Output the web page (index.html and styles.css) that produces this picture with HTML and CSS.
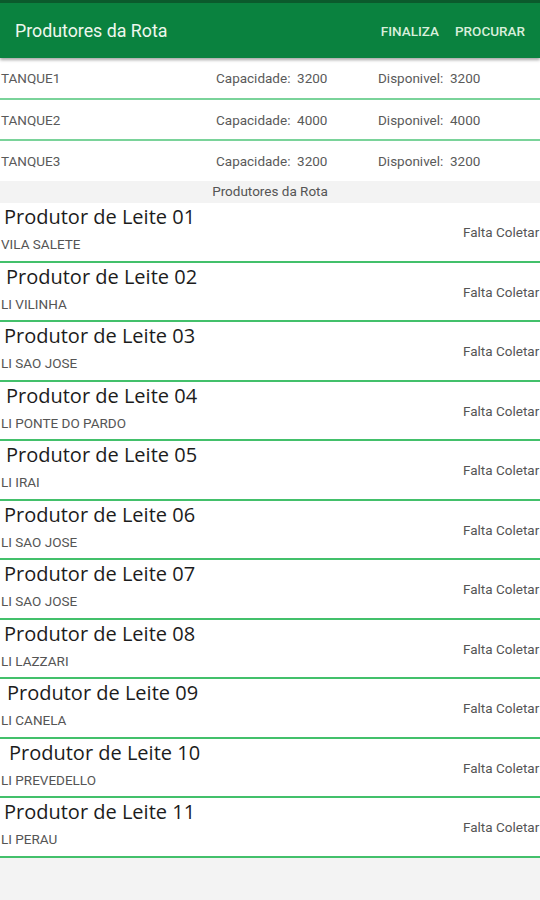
FILE: index.html
```html
<!DOCTYPE html>
<html>

<head>
    <title>Produtores da Rota</title>
    <link rel="stylesheet" href="styles.css">
</head>

<body>
    <div class="toolbar">
        <div class="toolbar-title">Produtores da Rota</div>
        <div class="toolbar-actions">
            <span class="action">FINALIZA</span>
            <span class="action">PROCURAR</span>
        </div>
    </div>

    <div class="tanks">
        <div class="tank">
            <span class="tank-name">TANQUE1</span>
            <span class="tank-cap">Capacidade:&nbsp; 3200</span>
            <span class="tank-free">Disponivel:&nbsp; 3200</span>
        </div>
        <div class="tank">
            <span class="tank-name">TANQUE2</span>
            <span class="tank-cap">Capacidade:&nbsp; 4000</span>
            <span class="tank-free">Disponivel:&nbsp; 4000</span>
        </div>
        <div class="tank last">
            <span class="tank-name">TANQUE3</span>
            <span class="tank-cap">Capacidade:&nbsp; 3200</span>
            <span class="tank-free">Disponivel:&nbsp; 3200</span>
        </div>
    </div>

    <div class="section">Produtores da Rota</div>

    <div class="list">
        <div class="item">
            <div class="info">
                <div class="name">Produtor de Leite 01</div>
                <div class="place">VILA SALETE</div>
            </div>
            <div class="status">Falta Coletar</div>
        </div>
        <div class="item">
            <div class="info">
                <div class="name n2">Produtor de Leite 02</div>
                <div class="place">LI VILINHA</div>
            </div>
            <div class="status">Falta Coletar</div>
        </div>
        <div class="item">
            <div class="info">
                <div class="name">Produtor de Leite 03</div>
                <div class="place">LI SAO JOSE</div>
            </div>
            <div class="status">Falta Coletar</div>
        </div>
        <div class="item">
            <div class="info">
                <div class="name n2">Produtor de Leite 04</div>
                <div class="place">LI PONTE DO PARDO</div>
            </div>
            <div class="status">Falta Coletar</div>
        </div>
        <div class="item">
            <div class="info">
                <div class="name n2">Produtor de Leite 05</div>
                <div class="place">LI IRAI</div>
            </div>
            <div class="status">Falta Coletar</div>
        </div>
        <div class="item">
            <div class="info">
                <div class="name">Produtor de Leite 06</div>
                <div class="place">LI SAO JOSE</div>
            </div>
            <div class="status">Falta Coletar</div>
        </div>
        <div class="item">
            <div class="info">
                <div class="name">Produtor de Leite 07</div>
                <div class="place">LI SAO JOSE</div>
            </div>
            <div class="status">Falta Coletar</div>
        </div>
        <div class="item">
            <div class="info">
                <div class="name">Produtor de Leite 08</div>
                <div class="place">LI LAZZARI</div>
            </div>
            <div class="status">Falta Coletar</div>
        </div>
        <div class="item">
            <div class="info">
                <div class="name n3">Produtor de Leite 09</div>
                <div class="place">LI CANELA</div>
            </div>
            <div class="status">Falta Coletar</div>
        </div>
        <div class="item">
            <div class="info">
                <div class="name n4">Produtor de Leite 10</div>
                <div class="place">LI PREVEDELLO</div>
            </div>
            <div class="status">Falta Coletar</div>
        </div>
        <div class="item">
            <div class="info">
                <div class="name">Produtor de Leite 11</div>
                <div class="place">LI PERAU</div>
            </div>
            <div class="status">Falta Coletar</div>
        </div>
    </div>
</body>

</html>
```

FILE: styles.css
```css
body {
    margin: 0;
    width: 540px;
    height: 900px;
    overflow: hidden;
    background: #f3f3f3;
    font-family: Roboto, "Liberation Sans", sans-serif;
}

/* top bar */
.toolbar {
    height: 58px;
    background: #0a823f;
    border-top: 3px solid #0b5a2c;
    box-sizing: border-box;
    display: flex;
    align-items: center;
    justify-content: space-between;
    padding: 0 15px 0 15px;
    box-shadow: 0 2px 3px rgba(0, 0, 0, 0.35);
    position: relative;
}

.toolbar-title {
    color: #eef7ee;
    font-size: 17.8px;
}

.toolbar-actions {
    display: flex;
    gap: 16px;
}

.action {
    color: #d8eedb;
    font-size: 13.5px;
    font-weight: 500;
}

/* tanks */
.tanks {
    background: #fff;
}

.tank {
    height: 41px;
    display: flex;
    align-items: center;
    font-size: 13.5px;
    color: #5a5a5a;
    border-bottom: 2px solid #7ad39a;
    box-sizing: border-box;
}

.tank.last {
    border-bottom: 0;
    height: 40px;
}

.tank:first-child {
    height: 42px;
}

.tank-name {
    width: 215px;
    padding-left: 1px;
}

.tank-cap {
    width: 162px;
}

/* section header */
.section {
    height: 22px;
    line-height: 21px;
    text-align: center;
    font-size: 13.5px;
    color: #555;
    background: #f3f3f3;
}

/* producers */
.list {
    background: #fff;
}

.item {
    height: 59.5px;
    display: flex;
    border-bottom: 2px solid #43c06b;
    box-sizing: border-box;
}

.info {
    width: 463px;
    flex: none;
    padding-top: 2px;
}

.name {
    font-family: "Open Sans", "DejaVu Sans", sans-serif;
    font-size: 20px;
    color: #1c1c1c;
    line-height: 24px;
    padding-left: 4px;
}

.name.n2 {
    padding-left: 6px;
}

.name.n3 {
    padding-left: 7px;
}

.name.n4 {
    padding-left: 9px;
}

.place {
    font-size: 13.5px;
    color: #555;
    line-height: 16px;
    margin-top: 7px;
    padding-left: 1px;
}

.status {
    align-self: center;
    white-space: nowrap;
    font-size: 13.5px;
    color: #555;
    padding-top: 1px;
}
```
